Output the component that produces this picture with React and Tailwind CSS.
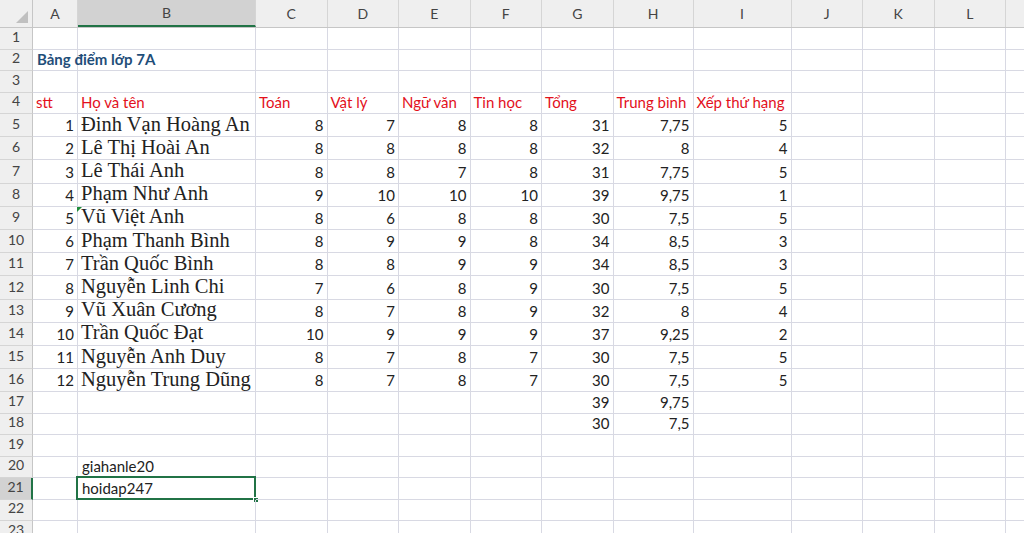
import React from "react";

const COLS = [
  { id: "A", w: "w-[45px]" },
  { id: "B", w: "w-[178px]" },
  { id: "C", w: "w-[71.5px]" },
  { id: "D", w: "w-[71.5px]" },
  { id: "E", w: "w-[71.5px]" },
  { id: "F", w: "w-[71.5px]" },
  { id: "G", w: "w-[71.5px]" },
  { id: "H", w: "w-[80px]" },
  { id: "I", w: "w-[98px]" },
  { id: "J", w: "w-[71.5px]" },
  { id: "K", w: "w-[71.5px]" },
  { id: "L", w: "w-[71.5px]" },
  { id: "", w: "w-[40px]" },
];

const students = [
  [1, "Đinh Vạn Hoàng An", 8, 7, 8, 8, 31, "7,75", 5],
  [2, "Lê Thị Hoài An", 8, 8, 8, 8, 32, "8", 4],
  [3, "Lê Thái Anh", 8, 8, 7, 8, 31, "7,75", 5],
  [4, "Phạm Như Anh", 9, 10, 10, 10, 39, "9,75", 1],
  [5, "Vũ Việt Anh", 8, 6, 8, 8, 30, "7,5", 5],
  [6, "Phạm Thanh Bình", 8, 9, 9, 8, 34, "8,5", 3],
  [7, "Trần Quốc Bình", 8, 8, 9, 9, 34, "8,5", 3],
  [8, "Nguyễn Linh Chi", 7, 6, 8, 9, 30, "7,5", 5],
  [9, "Vũ Xuân Cương", 8, 7, 8, 9, 32, "8", 4],
  [10, "Trần Quốc Đạt", 10, 9, 9, 9, 37, "9,25", 2],
  [11, "Nguyễn Anh Duy", 8, 7, 8, 7, 30, "7,5", 5],
  [12, "Nguyễn Trung Dũng", 8, 7, 8, 7, 30, "7,5", 5],
];

const headers = ["stt", "Họ và tên", "Toán", "Vật lý", "Ngữ văn", "Tin học", "Tổng", "Trung bình", "Xếp thứ hạng"];

// build cell content per row: { colIndex: { v, kind } }
const buildRows = () => {
  const rows = {};
  rows[2] = { 0: { v: "Bảng điểm lớp 7A", kind: "title" } };
  rows[4] = {};
  headers.forEach((h, i) => (rows[4][i] = { v: h, kind: "head" }));
  students.forEach((s, idx) => {
    const r = {};
    s.forEach((v, i) => {
      r[i] = i === 1 ? { v, kind: "name" } : { v, kind: "num" };
    });
    rows[5 + idx] = r;
  });
  rows[17] = { 6: { v: 39, kind: "num" }, 7: { v: "9,75", kind: "num" } };
  rows[18] = { 6: { v: 30, kind: "num" }, 7: { v: "7,5", kind: "num" } };
  rows[20] = { 1: { v: "giahanle20", kind: "text" } };
  rows[21] = { 1: { v: "hoidap247", kind: "text" } };
  return rows;
};

const rowHeight = (n) => (n >= 5 && n <= 16 ? "h-[23.2px]" : "h-[21.5px]");

const Cell = ({ col, cell, row, ci }) => {
  let content = null;
  if (cell) {
    if (cell.kind === "title")
      content = (
        <span className="relative z-10 pl-[4px] whitespace-nowrap font-bold text-[15px] text-[#1f4e79] font-['Lato',sans-serif] leading-none pb-[3px]">
          {cell.v}
        </span>
      );
    else if (cell.kind === "head")
      content = (
        <span className="pl-[3px] whitespace-nowrap text-[15px] text-[#e3101c] font-['Lato',sans-serif] leading-none pb-[3px]">
          {cell.v}
        </span>
      );
    else if (cell.kind === "name")
      content = (
        <span className="pl-[3px] whitespace-nowrap text-[20.5px] text-[#222] font-['Liberation_Serif',serif] leading-none pb-[2px]">
          {cell.v}
        </span>
      );
    else if (cell.kind === "text")
      content = (
        <span className="pl-[4px] whitespace-nowrap text-[15px] text-[#222] font-['Lato',sans-serif] leading-none pb-[3px]">
          {cell.v}
        </span>
      );
    else
      content = (
        <span className="ml-auto pr-[3px] whitespace-nowrap text-[15px] text-[#222] font-['Lato',sans-serif] leading-none pb-[3px]">
          {cell.v}
        </span>
      );
  }
  const selected = row === 21 && ci === 1;
  return (
    <div
      className={`${col.w} shrink-0 relative flex items-end overflow-visible border-r border-b border-[#d8d9e3]`}
    >
      {content}
      {row === 9 && ci === 1 && (
        <div className="absolute -left-px top-0 w-0 h-0 border-t-[5px] border-t-[#1e8c3a] border-r-[5px] border-r-transparent" />
      )}
      {selected && (
        <>
          <div className="absolute -left-[2px] -top-[2px] -right-px -bottom-px border-2 border-[#217346] pointer-events-none" />
          <div className="absolute -right-[4px] -bottom-[4px] w-[6px] h-[6px] bg-[#217346] border border-white" />
        </>
      )}
    </div>
  );
};

export default function App() {
  const rows = buildRows();
  const rowNums = Array.from({ length: 23 }, (_, i) => i + 1);
  return (
    <div className="w-[1024px] h-[533px] overflow-hidden bg-white select-none">
      {/* column headers */}
      <div className="flex h-[28px] bg-[#efefef] border-b border-[#c6c6c6]">
        <div className="w-[33px] shrink-0 relative border-r border-[#c6c6c6]">
          <div className="absolute right-[4px] bottom-[4px] w-0 h-0 border-l-[12px] border-l-transparent border-b-[12px] border-b-[#c0c0c0]" />
        </div>
        {COLS.map((c, i) => (
          <div
            key={i}
            className={`${c.w} shrink-0 flex items-center justify-center border-r border-[#d5d5d5] text-[14px] text-[#444] font-['Lato',sans-serif] ${
              c.id === "B" ? "bg-[#d2d2d2] border-b-2 border-b-[#217346] text-[#222]" : ""
            }`}
          >
            {c.id}
          </div>
        ))}
      </div>
      {rowNums.map((n) => (
        <div key={n} className={`flex ${rowHeight(n)}`}>
          <div
            className={`w-[33px] shrink-0 flex items-end justify-center pb-[2px] text-[14px] text-[#444] font-['Lato',sans-serif] border-b border-[#d5d5d5] ${
              n === 21 ? "bg-[#d2d2d2] border-r-2 border-r-[#217346]" : "bg-[#efefef] border-r border-r-[#c6c6c6]"
            }`}
          >
            {n}
          </div>
          {COLS.map((c, ci) => (
            <Cell key={ci} col={c} cell={rows[n] && rows[n][ci]} row={n} ci={ci} />
          ))}
        </div>
      ))}
    </div>
  );
}
